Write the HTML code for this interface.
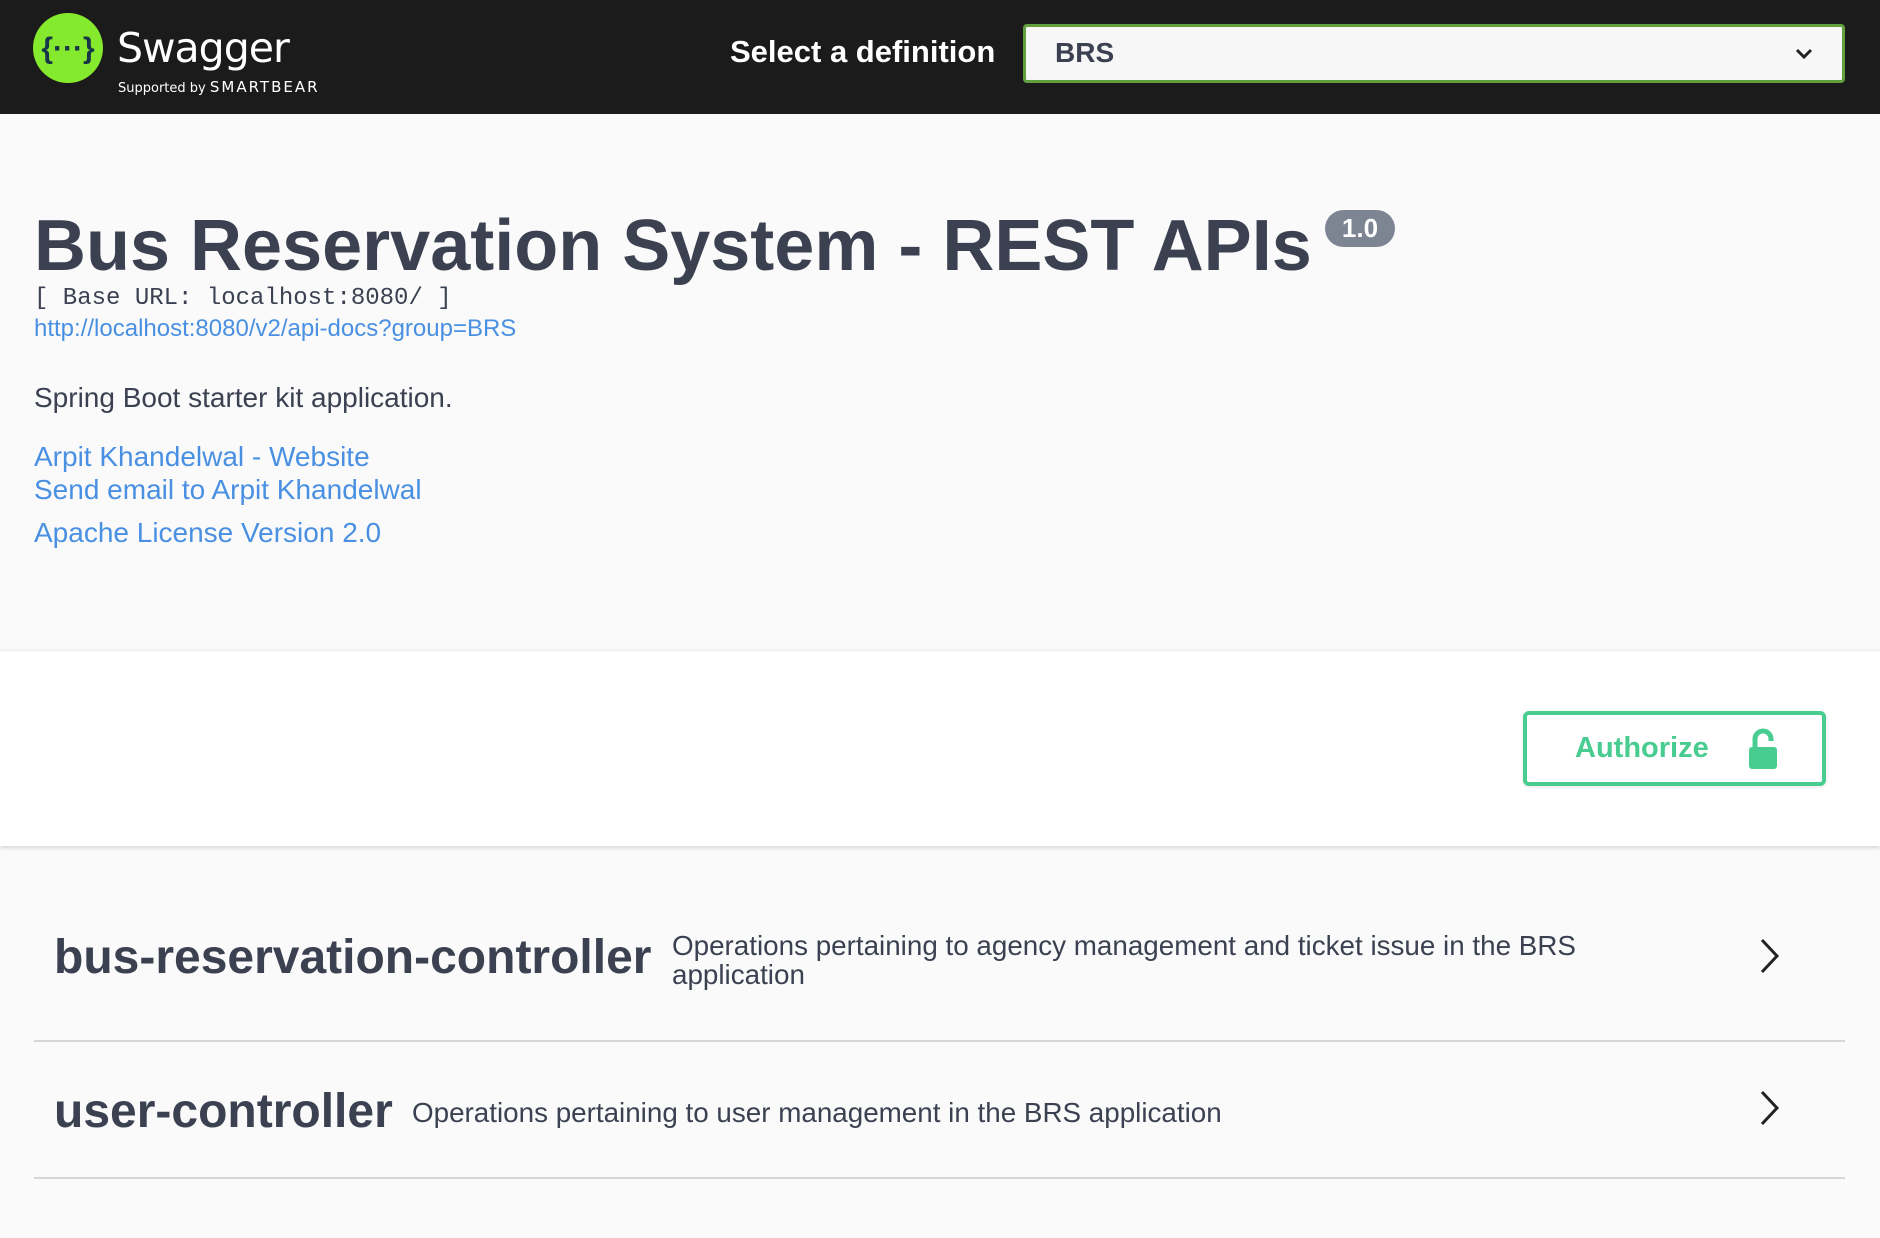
<!DOCTYPE html>
<html><head><meta charset="utf-8"><style>
*{margin:0;padding:0;box-sizing:border-box}
body{width:1880px;height:1238px;background:#fafafa;font-family:"Liberation Sans",sans-serif;color:#3b4151;overflow:hidden;position:relative}
.top{position:absolute;left:0;top:0;width:1880px;height:114px;background:#1b1b1b}
a{color:#4990e2;text-decoration:none}
.abs{position:absolute;white-space:nowrap}
</style></head><body>
<div class="top">
 <svg class="abs" style="left:33px;top:13px" width="70" height="70" viewBox="0 0 70 70">
  <circle cx="35" cy="35" r="35" fill="#85ea2d"/>
  <text x="35" y="45" text-anchor="middle" font-family="Liberation Sans" font-weight="bold" font-size="30" fill="#173647">{···}</text>
 </svg>
 <div class="abs" style="left:117px;top:24px;color:#fff;font-size:41px;font-family:'DejaVu Sans',sans-serif;letter-spacing:-1px">Swagger</div>
 <div class="abs" style="left:118px;top:78px;color:#fff;font-size:13px;font-family:'DejaVu Sans',sans-serif">Supported by <span style="font-size:15px;letter-spacing:2px">SMARTBEAR</span></div>
 <div class="abs" style="left:730px;top:34px;color:#fff;font-size:31px;font-weight:bold">Select a definition</div>
 <div class="abs" style="left:1023px;top:24px;width:822px;height:59px;border:3px solid #62a03f;border-radius:4px;background:#f7f7f7">
  <div class="abs" style="left:29px;top:10px;font-size:28px;font-weight:bold;color:#3b4151">BRS</div>
  <svg class="abs" style="right:28px;top:20px" width="20" height="14" viewBox="0 0 20 14"><path d="M3 3l7 7 7-7" stroke="#222" stroke-width="3" fill="none"/></svg>
 </div>
</div>
<div class="abs" style="left:34px;top:205px;font-size:72px;font-weight:bold;color:#3b4151">Bus Reservation System - REST APIs</div>
<div class="abs" style="left:1325px;top:210px;width:70px;height:37px;border-radius:19px;background:#7d8492;color:#fff;font-size:26px;font-weight:bold;text-align:center;line-height:37px">1.0</div>
<div class="abs" style="left:34px;top:285px;font-family:'Liberation Mono',monospace;font-size:24px;color:#3b4151">[ Base URL: localhost:8080/ ]</div>
<a class="abs" style="left:34px;top:315px;font-size:24px" href="#">http://localhost:8080/v2/api-docs?group=BRS</a>
<div class="abs" style="left:34px;top:382px;font-size:28px">Spring Boot starter kit application.</div>
<a class="abs" style="left:34px;top:441px;font-size:28px" href="#">Arpit Khandelwal - Website</a>
<a class="abs" style="left:34px;top:474px;font-size:28px" href="#">Send email to Arpit Khandelwal</a>
<a class="abs" style="left:34px;top:517px;font-size:28px" href="#">Apache License Version 2.0</a>
<div class="abs" style="left:0;top:650px;width:1880px;height:196px;background:#fff;box-shadow:0 2px 4px rgba(0,0,0,.15);border-top:1px solid #eee"></div>
<div class="abs" style="left:1523px;top:711px;width:303px;height:75px;border:4px solid #49cc90;border-radius:6px;background:#fff;box-shadow:0 1px 3px rgba(0,0,0,.1)">
 <div class="abs" style="left:48px;top:17px;font-size:29px;font-weight:bold;color:#49cc90">Authorize</div>
 <svg class="abs" style="left:220px;top:12px" width="32" height="44" viewBox="0 0 32 44"><path d="M8 22V12a8 8 0 0 1 16 0v2" stroke="#49cc90" stroke-width="5" fill="none"/><rect x="2" y="20" width="28" height="22" rx="3" fill="#49cc90"/></svg>
</div>
<div class="abs" style="left:54px;top:930px;font-size:48px;font-weight:bold">bus-reservation-controller</div>
<div class="abs" style="left:672px;top:931px;font-size:27.8px;line-height:29px">Operations pertaining to agency management and ticket issue in the BRS<br>application</div>
<svg class="abs" style="left:1758px;top:936px" width="24" height="40" viewBox="0 0 24 40"><path d="M4 4l15 16L4 36" stroke="#222" stroke-width="3" fill="none"/></svg>
<div class="abs" style="left:34px;top:1040px;width:1811px;height:2px;background:#d5d6d9"></div>
<div class="abs" style="left:54px;top:1084px;font-size:48px;font-weight:bold">user-controller</div>
<div class="abs" style="left:412px;top:1097px;font-size:27.8px">Operations pertaining to user management in the BRS application</div>
<svg class="abs" style="left:1758px;top:1088px" width="24" height="40" viewBox="0 0 24 40"><path d="M4 4l15 16L4 36" stroke="#222" stroke-width="3" fill="none"/></svg>
<div class="abs" style="left:34px;top:1177px;width:1811px;height:2px;background:#d5d6d9"></div>
</body></html>
